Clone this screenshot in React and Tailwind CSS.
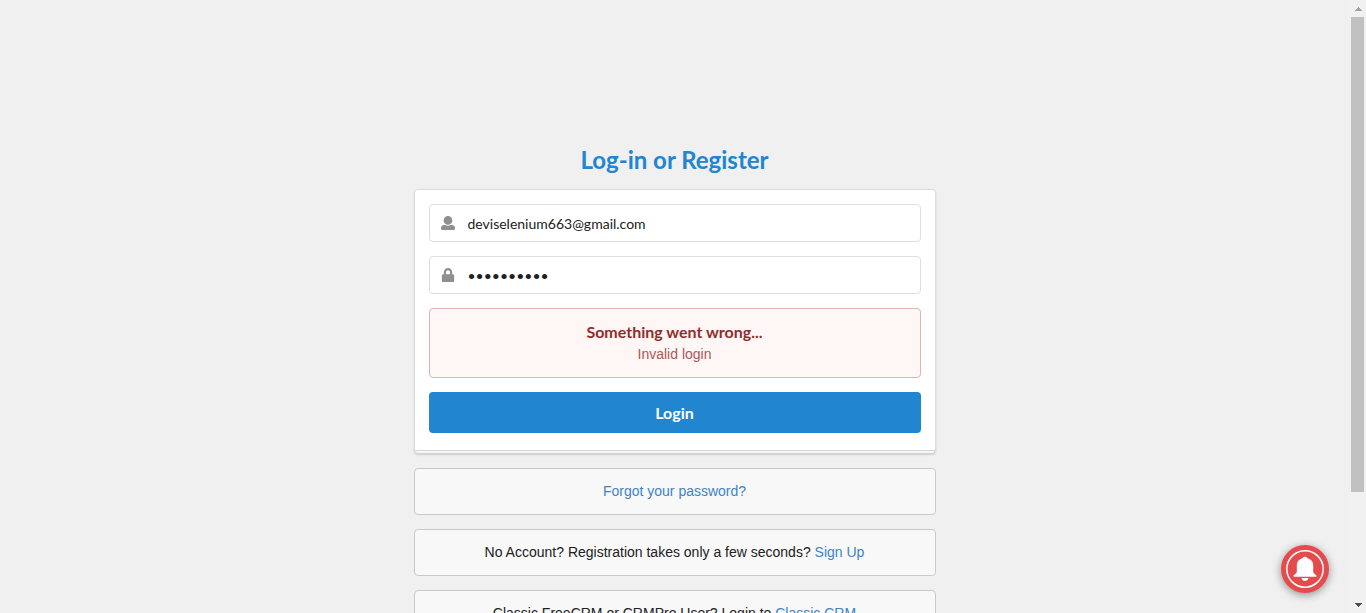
import React from "react";
import { FaLock } from "react-icons/fa";

const fieldClass =
  "block h-[38px] w-full rounded border border-[#dededf] bg-white pr-3.5 pl-[38px] font-[Lato,sans-serif] text-sm text-[#212121] outline-none";

function UserIcon() {
  return (
    <svg viewBox="0 0 512 512" className="size-3.5" fill="currentColor" aria-hidden="true">
      <path d="M256 0c88.366 0 160 71.634 160 160s-71.634 160-160 160S96 248.366 96 160 167.634 0 256 0zm183.283 333.821l-71.313-17.828c-74.923 53.89-165.738 41.864-223.94 0l-71.313 17.828C29.981 344.505 0 382.903 0 426.955V464c0 26.51 21.49 48 48 48h416c26.51 0 48-21.49 48-48v-37.045c0-44.052-29.981-82.45-72.717-93.134z" />
    </svg>
  );
}

function Field({ id, label, icon, ...props }) {
  return (
    <div className="relative">
      <label htmlFor={id} aria-label={label} className="absolute inset-y-0 left-0 flex w-[38px] items-center justify-center text-[#8f8f8f]">
        {icon}
      </label>
      <input id={id} className={fieldClass} {...props} />
    </div>
  );
}

function Notice({ children }) {
  return (
    <div className="rounded border border-[#c9c9ca] bg-[#f8f8f8] px-3.5 pt-3 pb-[13px] text-center leading-5">
      {children}
    </div>
  );
}

function NoticeLink({ children }) {
  return (
    <a href="#" className="text-[#4183c4]">
      {children}
    </a>
  );
}

function BellButton() {
  return (
    <button
      type="button"
      aria-label="Notifications"
      className="absolute right-5 bottom-5 size-12 rounded-full bg-[#e54b4d] shadow-[0_2px_8px_rgba(0,0,0,0.4)]"
    >
      <svg viewBox="0 0 48 48" className="size-12" aria-hidden="true">
        <circle cx="24" cy="24" r="18.2" fill="none" stroke="#fff" strokeWidth="1.5" />
        <path
          fill="#fff"
          d="M24 11.8c-1.300 0-2.100.6-2.400 1.400-3.600.9-5.800 3.600-5.800 7.300v5.800c0 1.700-.8 2.600-3.200 4v1.500h22.800v-1.500c-2.400-1.400-3.200-2.300-3.200-4v-5.800c0-3.700-2.200-6.400-5.800-7.300-.3-.8-1.100-1.400-2.400-1.400zM20.500 32.900c.4 1.900 1.800 3 3.500 3s3.100-1.100 3.500-3z"
        />
      </svg>
    </button>
  );
}

function ScrollRail() {
  return (
    <div aria-hidden="true" className="flex w-[17px] shrink-0 flex-col items-center bg-[#f1f1f1]">
      <div className="flex h-[17px] shrink-0 items-center justify-center">
        <svg viewBox="0 0 8 4" className="h-1 w-2" shapeRendering="crispEdges">
          <path d="M0 4L4 0l4 4z" fill="#a3a3a3" />
        </svg>
      </div>
      <div className="min-h-0 grow">
        <div className="h-[82%] w-[13px] bg-[#c1c1c1]" />
      </div>
      <div className="flex h-[17px] shrink-0 items-center justify-center">
        <svg viewBox="0 0 8 4" className="h-1 w-2" shapeRendering="crispEdges">
          <path d="M0 0h8L4 4z" fill="#505050" />
        </svg>
      </div>
    </div>
  );
}

export default function App() {
  return (
    <div className="flex h-screen overflow-hidden bg-[#f0f0f0] font-['Liberation_Sans',Arial,sans-serif] text-sm text-[#212121]">
      <div className="relative min-w-0 grow overflow-hidden">
        <main className="mx-auto flex w-full max-w-[522px] flex-col gap-3.5 pt-[145px]">
          <h2 className="text-center font-[Lato,sans-serif] text-2xl leading-[30px] font-bold text-[#2185d0]">
            Log-in or Register
          </h2>
          <form
            onSubmit={(event) => event.preventDefault()}
            className="rounded border border-[#dcdcdd] bg-white shadow-[0_1px_2px_rgba(34,36,38,0.15)]"
          >
            <div className="flex flex-col gap-3.5 px-3.5 pt-3.5 pb-[17px]">
              <Field id="email" label="E-mail address" icon={<UserIcon />} type="text" name="email" defaultValue="deviselenium663@gmail.com" />
              <Field id="password" label="Password" icon={<FaLock className="size-3.5" />} type="password" name="password" defaultValue="abcdefghij" />
              <div role="alert" className="rounded border border-[#e0b4b4] bg-[#fff6f6] px-5 py-[13px] text-center">
                <div className="font-[Lato,sans-serif] text-base leading-5 font-bold text-[#912d2b]">Something went wrong...</div>
                <p className="pt-0.5 leading-5 text-[#ad5856]">Invalid login</p>
              </div>
              <button type="submit" className="h-[41px] rounded bg-[#2185d0] font-[Lato,sans-serif] text-base font-bold text-white">
                Login
              </button>
            </div>
            <div className="h-[3px] rounded-b border-t border-[#d4d4d5] bg-[#f7f7f7] shadow-[0_1px_0_#d0d0d0]" />
          </form>
          <Notice>
            <NoticeLink>Forgot your password?</NoticeLink>
          </Notice>
          <Notice>
            No Account? Registration takes only a few seconds? <NoticeLink>Sign Up</NoticeLink>
          </Notice>
          <Notice>
            Classic FreeCRM or CRMPro User? Login to <NoticeLink>Classic CRM</NoticeLink>
          </Notice>
        </main>
        <BellButton />
      </div>
      <ScrollRail />
    </div>
  );
}
